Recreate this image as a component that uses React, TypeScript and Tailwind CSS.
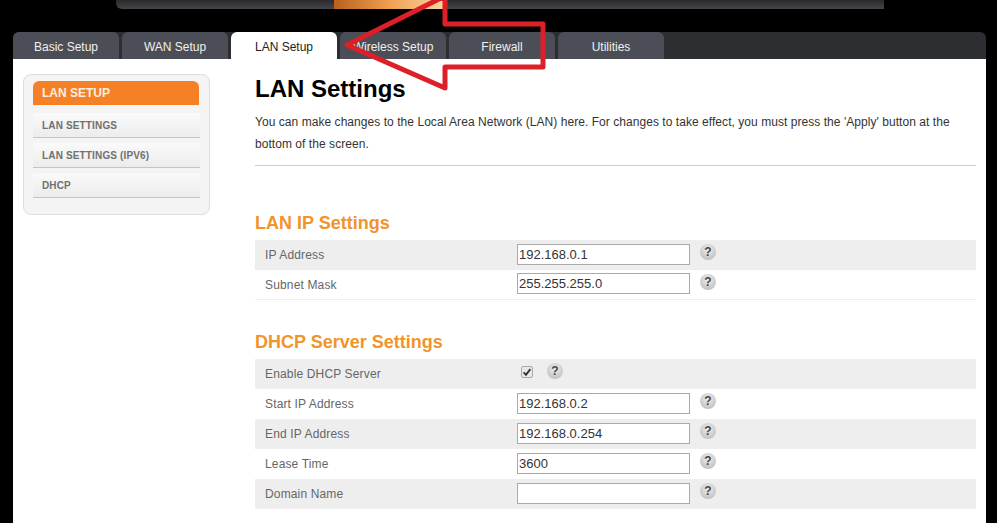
const font = "font-['Liberation_Sans',Arial,sans-serif]";

const tabs = ["Basic Setup", "WAN Setup", "LAN Setup", "Wireless Setup", "Firewall", "Utilities"];
const sideItems = ["LAN SETTINGS", "LAN SETTINGS (IPV6)", "DHCP"];

function Help() {
  return (
    <span className="flex h-[16px] w-[16px] items-center justify-center rounded-full bg-[radial-gradient(circle_at_50%_35%,#eeeeee,#b4b4b4)] text-[12px] font-bold leading-none text-[#444]">
      ?
    </span>
  );
}

function Row({ label, value, check, gray, line }: { label: string; value?: string; check?: boolean; gray?: boolean; line?: boolean }) {
  return (
    <div className={`flex h-[30px] items-center pl-[10px] ${gray ? "bg-[#eeeeee]" : ""} ${line ? "border-b border-[#eeeeee]" : ""}`}>
      <div className="w-[252px] text-[12px] tracking-[0.15px] text-[#666666]">{label}</div>
      {check ? (
        <div className="flex items-center gap-[14px] pl-[4px]">
          <span className="flex h-[12px] w-[12px] -translate-y-[2px] items-center justify-center rounded-[2px] border border-[#aaaaaa] bg-[#e8e8e8]">
            <svg viewBox="0 0 12 12" className="h-[10px] w-[10px]">
              <path d="M2 6.5 L4.8 9.5 L10 2.5" fill="none" stroke="#333" strokeWidth="2.2" />
            </svg>
          </span>
          <div className="-translate-y-[3px]"><Help /></div>
        </div>
      ) : (
        <div className="flex items-center gap-[10px]">
          <input
            readOnly
            defaultValue={value}
            className="mb-[2px] h-[21px] w-[173px] border border-[#aaaaaa] bg-white px-[1px] text-[13px] text-[#333333] outline-none"
          />
          <div className="-translate-y-[3px]"><Help /></div>
        </div>
      )}
    </div>
  );
}

export default function App() {
  return (
    <div className={`relative h-[523px] w-[997px] overflow-hidden bg-black ${font}`}>
      {/* header strip */}
      <div className="ml-[116px] flex h-[9px] w-[768px] overflow-hidden rounded-bl-[6px] bg-gradient-to-b from-[#2a2a2c] to-[#46474b]">
        <div className="ml-[218px] h-full w-[111px] bg-gradient-to-r from-[#b8601c] via-[#f0a050] to-[#f6d6a0]" />
      </div>

      {/* tabs */}
      <div className="ml-[13px] mt-[23px] flex h-[27px] w-[973px] gap-[3px] rounded-t-[6px] bg-[#2c2e32]">
        {tabs.map((t) => (
          <div
            key={t}
            className={`flex h-[27px] w-[106px] items-center justify-center rounded-t-[6px] pt-[2px] text-[12px] ${
              t === "LAN Setup" ? "bg-white text-[#222222]" : "bg-[#4b4e56] text-[#f0f0f0]"
            }`}
          >
            {t}
          </div>
        ))}
      </div>

      {/* body */}
      <div className="ml-[13px] flex h-[464px] w-[973px] bg-white">
        <div className="ml-[10px] mt-[15px] h-[141px] w-[187px] rounded-[8px] border border-[#dddddd] bg-[#f4f4f4] px-[9px] pt-[6px]">
          <div className="flex h-[24px] w-[166px] items-center rounded-t-[6px] bg-[#f58025] pl-[9px] text-[12px] font-bold text-[#fbeee0]">
            LAN SETUP
          </div>
          <div className="mt-[8px] flex flex-col gap-[5px]">
            {sideItems.map((s) => (
              <div
                key={s}
                className="flex h-[25px] w-[167px] items-center border-b border-[#c4c4c4] bg-gradient-to-b from-[#fafafa] to-[#ececec] pl-[9px] text-[10px] font-bold tracking-[0.15px] text-[#707070]"
              >
                {s}
              </div>
            ))}
          </div>
        </div>

        <div className="ml-[45px] w-[721px]">
          <h1 className="mt-[15px] text-[24px] font-bold leading-[30px] text-black">LAN Settings</h1>
          <p className="mt-[7px] w-[710px] text-[12px] leading-[22px] tracking-[0.05px] text-[#333333]">
            You can make changes to the Local Area Network (LAN) here. For changes to take effect, you must press the 'Apply' button at the bottom of the screen.
          </p>
          <div className="mt-[10px] h-px bg-[#cccccc]" />

          <h2 className="mt-[47px] text-[18px] font-bold leading-[20px] text-[#f0942c]">LAN IP Settings</h2>
          <div className="mt-[7px]">
            <Row label="IP Address" value="192.168.0.1" gray />
            <Row label="Subnet Mask" value="255.255.255.0" line />
          </div>

          <h2 className="mt-[32px] text-[18px] font-bold leading-[20px] text-[#f0942c]">DHCP Server Settings</h2>
          <div className="mt-[7px]">
            <Row label="Enable DHCP Server" check gray />
            <Row label="Start IP Address" value="192.168.0.2" />
            <Row label="End IP Address" value="192.168.0.254" gray />
            <Row label="Lease Time" value="3600" />
            <Row label="Domain Name" value="" gray />
          </div>
        </div>
      </div>

      {/* annotation arrow */}
      <svg className="absolute left-0 top-0" width="997" height="523">
        <path
          d="M347 45 L445 -4 L445 24 L543 24 L543 67 L445 67 L445 88 Z"
          fill="none"
          stroke="#dd2028"
          strokeWidth="5"
          strokeLinejoin="round"
        />
      </svg>
    </div>
  );
}
